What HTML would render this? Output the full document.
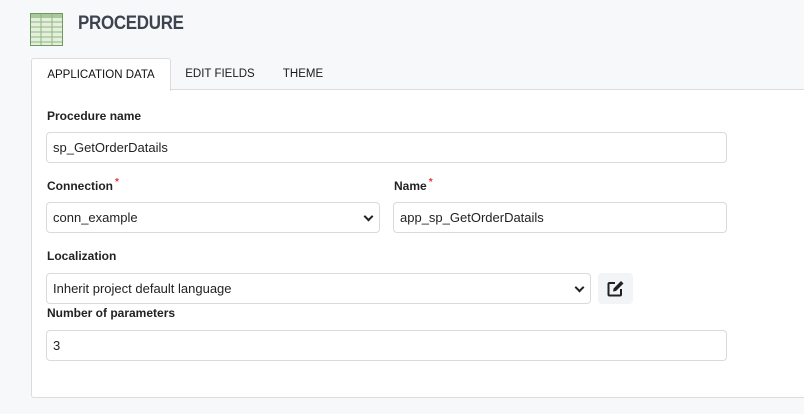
<!DOCTYPE html>
<html><head><meta charset="utf-8"><style>
*{box-sizing:border-box;margin:0;padding:0}
body{width:804px;height:414px;background:#f7f8fa;font-family:"Liberation Sans",sans-serif;position:relative;overflow:hidden;color:#222}
.a{position:absolute}
.title{left:78px;top:13px;font-size:19px;font-weight:bold;color:#3d4450;letter-spacing:-0.3px;transform:scaleX(0.89);transform-origin:0 0}
.panel{left:31px;top:89px;width:790px;height:309px;background:#fff;border:1px solid #dcdcdc;border-radius:3px}
.tab{top:58px;height:32px;font-size:11.5px;line-height:32px;color:#1a1a1a;text-align:center}
.tab.act{left:31px;width:140px;background:#fff;border:1px solid #dcdcdc;border-bottom:none;border-radius:3px 3px 0 0;color:#111;z-index:2;height:33px}
.lbl{font-size:12px;font-weight:bold;color:#222}
.req{color:#e33;font-size:10px;position:relative;top:-5px;margin-left:2px}
.in{background:#fff;border:1px solid #dadada;border-radius:4px;font-size:13px;line-height:29px;padding-left:6px;color:#222;height:31px}
.chev{position:absolute;right:7px;top:10px;width:7px;height:7px;border-right:2px solid #222;border-bottom:2px solid #222;transform:rotate(45deg)}
</style></head><body>
<svg class="a" style="left:30px;top:13px" width="33" height="33" viewBox="0 0 33 33">
<rect x="0.5" y="0.5" width="32" height="32" fill="#e4f0dc" stroke="#6e9a62"/>
<rect x="1" y="1" width="31" height="4" fill="#a9c99c"/>
<g stroke="#8fb584" stroke-width="1"><line x1="11" y1="1" x2="11" y2="32"/><line x1="22" y1="1" x2="22" y2="32"/>
<line x1="1" y1="9" x2="32" y2="9"/><line x1="1" y1="14" x2="32" y2="14"/><line x1="1" y1="19" x2="32" y2="19"/><line x1="1" y1="24" x2="32" y2="24"/><line x1="1" y1="29" x2="32" y2="29"/></g>
</svg>
<div class="a title">PROCEDURE</div>
<div class="a panel"></div>
<div class="a tab act">APPLICATION DATA</div>
<div class="a tab" style="left:171px;width:98px">EDIT FIELDS</div>
<div class="a tab" style="left:269px;width:68px">THEME</div>

<div class="a lbl" style="left:47px;top:109px">Procedure name</div>
<div class="a in" style="left:46px;top:132px;width:681px">sp_GetOrderDatails</div>

<div class="a lbl" style="left:47px;top:179px">Connection<span class="req">*</span></div>
<div class="a in" style="left:46px;top:202px;width:334px">conn_example<span class="chev"></span></div>
<div class="a lbl" style="left:394px;top:179px">Name<span class="req">*</span></div>
<div class="a in" style="left:393px;top:202px;width:334px">app_sp_GetOrderDatails</div>

<div class="a lbl" style="left:47px;top:249px">Localization</div>
<div class="a in" style="left:46px;top:273px;width:545px">Inherit project default language<span class="chev"></span></div>
<div class="a" style="left:598px;top:273px;width:35px;height:31px;background:#f3f4f6;border-radius:4px"></div>
<svg class="a" style="left:607px;top:280px" width="18" height="17" viewBox="0 0 18 17">
<path d="M8 3H2.5A1 1 0 0 0 1.5 4v10.5a1 1 0 0 0 1 1H13a1 1 0 0 0 1-1V9" fill="none" stroke="#222" stroke-width="2"/>
<path d="M6 11.5l0.6-3L14 1l2.5 2.5L9 11z" fill="#222"/>
</svg>
<div class="a lbl" style="left:47px;top:306px">Number of parameters</div>
<div class="a in" style="left:46px;top:330px;width:681px">3</div>
</body></html>
